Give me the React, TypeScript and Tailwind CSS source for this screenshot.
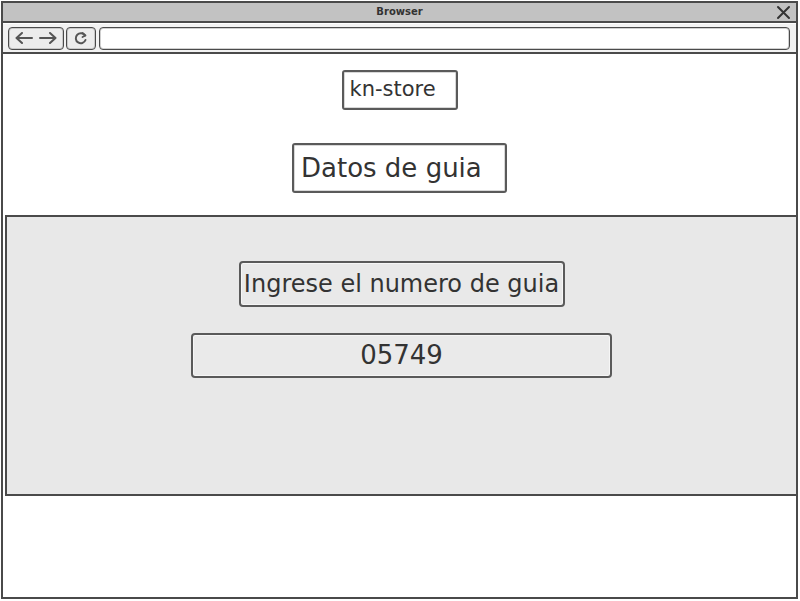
import React from "react";

const hand = { fontFamily: '"DejaVu Sans", "Noto Sans", sans-serif' };

export default function App() {
  return (
    <div className="w-[800px] h-[601px] bg-white relative overflow-hidden">
      <div className="ml-px mt-px w-[797px] h-[598px] border-2 border-[#4a4a4a] flex flex-col">
        {/* title bar */}
        <div className="h-[20px] bg-[#c2c2c2] border-b-2 border-[#4a4a4a] flex items-center relative shrink-0">
          <div className="flex-1 text-center text-[10px] font-bold text-[#333] leading-none" style={{ fontFamily: '"DejaVu Sans", sans-serif' }}>
            Browser
          </div>
          <svg className="absolute right-[5px] top-[2px]" width="15" height="15" viewBox="0 0 15 15">
            <path d="M2 2 L13 13 M13 2 L2 13" stroke="#333" strokeWidth="2" strokeLinecap="round" />
          </svg>
        </div>
        {/* toolbar */}
        <div className="h-[31px] bg-[#f2f2f2] border-t border-white border-b-2 border-b-[#4a4a4a] flex items-center pl-[5px] pr-[6px] gap-[2px] shrink-0">
          <div className="w-[56px] h-[23px] rounded-[4px] border-[1.5px] border-[#4a4a4a] bg-[#ececec] shadow-[inset_0_0_0_1px_#c8c8c8] flex items-center justify-center gap-[4px]">
            <svg width="20" height="12" viewBox="0 0 20 12">
              <path d="M18 6 H3 M8 1 L2.5 6 L8 11" stroke="#555" strokeWidth="2" fill="none" strokeLinecap="round" strokeLinejoin="round" />
            </svg>
            <svg width="20" height="12" viewBox="0 0 20 12">
              <path d="M2 6 H17 M12 1 L17.5 6 L12 11" stroke="#555" strokeWidth="2" fill="none" strokeLinecap="round" strokeLinejoin="round" />
            </svg>
          </div>
          <div className="w-[30px] h-[23px] rounded-[4px] border-[1.5px] border-[#4a4a4a] bg-[#ececec] shadow-[inset_0_0_0_1px_#c8c8c8] flex items-center justify-center">
            <svg width="14" height="14" viewBox="0 0 14 14">
              <path d="M11 4.5 A5 5 0 1 0 11.5 9" stroke="#555" strokeWidth="2" fill="none" strokeLinecap="round" />
              <path d="M8.5 2 L11.5 4.5 L8.5 6" stroke="#555" strokeWidth="1.8" fill="none" strokeLinecap="round" strokeLinejoin="round" />
            </svg>
          </div>
          <div className="flex-1 h-[23px] rounded-[4px] border-[1.5px] border-[#4a4a4a] bg-white shadow-[inset_0_0_0_1px_#d0d0d0] ml-[1px]" />
        </div>
        {/* content */}
        <div className="flex-1 flex flex-col items-center bg-white">
          <div
            className="mt-[16px] w-[116px] h-[40px] rounded-[3px] border-2 border-[#5a5a5a] bg-white shadow-[inset_0_0_0_1px_#d8d8d8] flex items-center pl-[6px] text-[21px] text-[#333]"
            style={hand}
          >
            kn-store
          </div>
          <div
            className="mt-[33px] w-[215px] h-[50px] rounded-[3px] border-2 border-[#5a5a5a] bg-white shadow-[inset_0_0_0_1px_#d8d8d8] flex items-center pl-[7px] text-[26px] text-[#333]"
            style={hand}
          >
            Datos de guia
          </div>
          <div className="mt-[22px] self-stretch ml-[2px] h-[281px] bg-[#e8e8e8] border-t-2 border-l-2 border-b-2 border-[#4a4a4a] flex flex-col items-center">
            <div
              className="mt-[44px] w-[326px] h-[46px] rounded-[4px] border-2 border-[#5a5a5a] bg-[#e9e9e9] shadow-[inset_0_0_0_1px_#f6f6f6] flex items-center justify-center text-[24px] text-[#333] whitespace-nowrap"
              style={hand}
            >
              Ingrese el numero de guia
            </div>
            <div
              className="mt-[26px] w-[421px] h-[45px] rounded-[4px] border-2 border-[#5a5a5a] bg-[#eaeaea] shadow-[inset_0_0_0_1px_#f6f6f6] flex items-center justify-center text-[26px] text-[#333]"
              style={hand}
            >
              05749
            </div>
          </div>
        </div>
      </div>
    </div>
  );
}
